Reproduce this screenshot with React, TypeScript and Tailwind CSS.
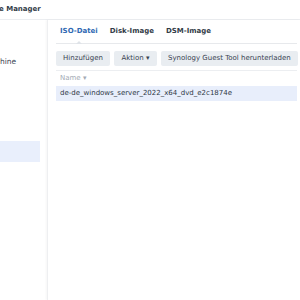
import React from 'react'

const tabs = ['ISO-Datei', 'Disk-Image', 'DSM-Image']

export default function App() {
  return (
    <div className="w-[300px] h-[300px] bg-white overflow-hidden text-[#394452] text-[7px]" style={{ fontFamily: '"DejaVu Sans", Verdana, sans-serif' }}>
      {/* Titelleiste */}
      <div className="h-[20px] border-b border-[#eceef1] flex items-center">
        <span className="font-bold text-[7px] -ml-[1px] text-[#333c48]">e Manager</span>
      </div>

      <div className="flex h-[280px]">
        {/* Sidebar */}
        <div className="w-[47px] shrink-0 pt-[35px]">
          <div className="h-[14px] flex items-center text-[7.5px]">hine</div>
          <div className="mt-[72px] w-[40px] h-[21px] bg-[#e9effc]" />
        </div>

        {/* Inhalt */}
        <div className="flex-1 min-w-0 border-l border-[#eeeff1] shadow-[-1px_0_2px_rgba(0,0,0,0.04)] pl-[8px] pr-[3px]">
          <div className="flex gap-[12px] h-[24px] items-center pl-[4px] border-b border-[#e7e9ec] relative">
            {tabs.map((t, i) => (
              <span key={t} className={`font-semibold text-[7px] whitespace-nowrap ${i === 0 ? 'text-[#2f69b3]' : 'text-[#333c48]'}`}>{t}</span>
            ))}
            <span className="absolute left-[20px] -bottom-[1px] w-0 h-0 border-l-[3px] border-r-[3px] border-b-[3px] border-l-transparent border-r-transparent border-b-[#dfe3e8]" />
          </div>

          <div className="flex gap-[4px] mt-[7px] whitespace-nowrap">
            <button className="shrink-0 w-[54px] h-[15px] bg-[#e9edf1] rounded-[2px]">Hinzufügen</button>
            <button className="shrink-0 w-[43px] h-[15px] bg-[#e9edf1] rounded-[2px]">Aktion ▾</button>
            <button className="flex-1 h-[15px] px-[7px] bg-[#e9edf1] rounded-[2px]">Synology Guest Tool herunterladen</button>
          </div>

          <div className="mt-[4px] border-t border-[#eceef1]">
            <div className="h-[15px] flex items-center pl-[4px] text-[#a3abb5]">Name ▾</div>
            <div className="h-[15px] flex items-center pl-[4px] bg-[#e8eefb] text-[#2f3946] whitespace-nowrap">de-de_windows_server_2022_x64_dvd_e2c1874e</div>
          </div>
        </div>
      </div>
    </div>
  )
}
